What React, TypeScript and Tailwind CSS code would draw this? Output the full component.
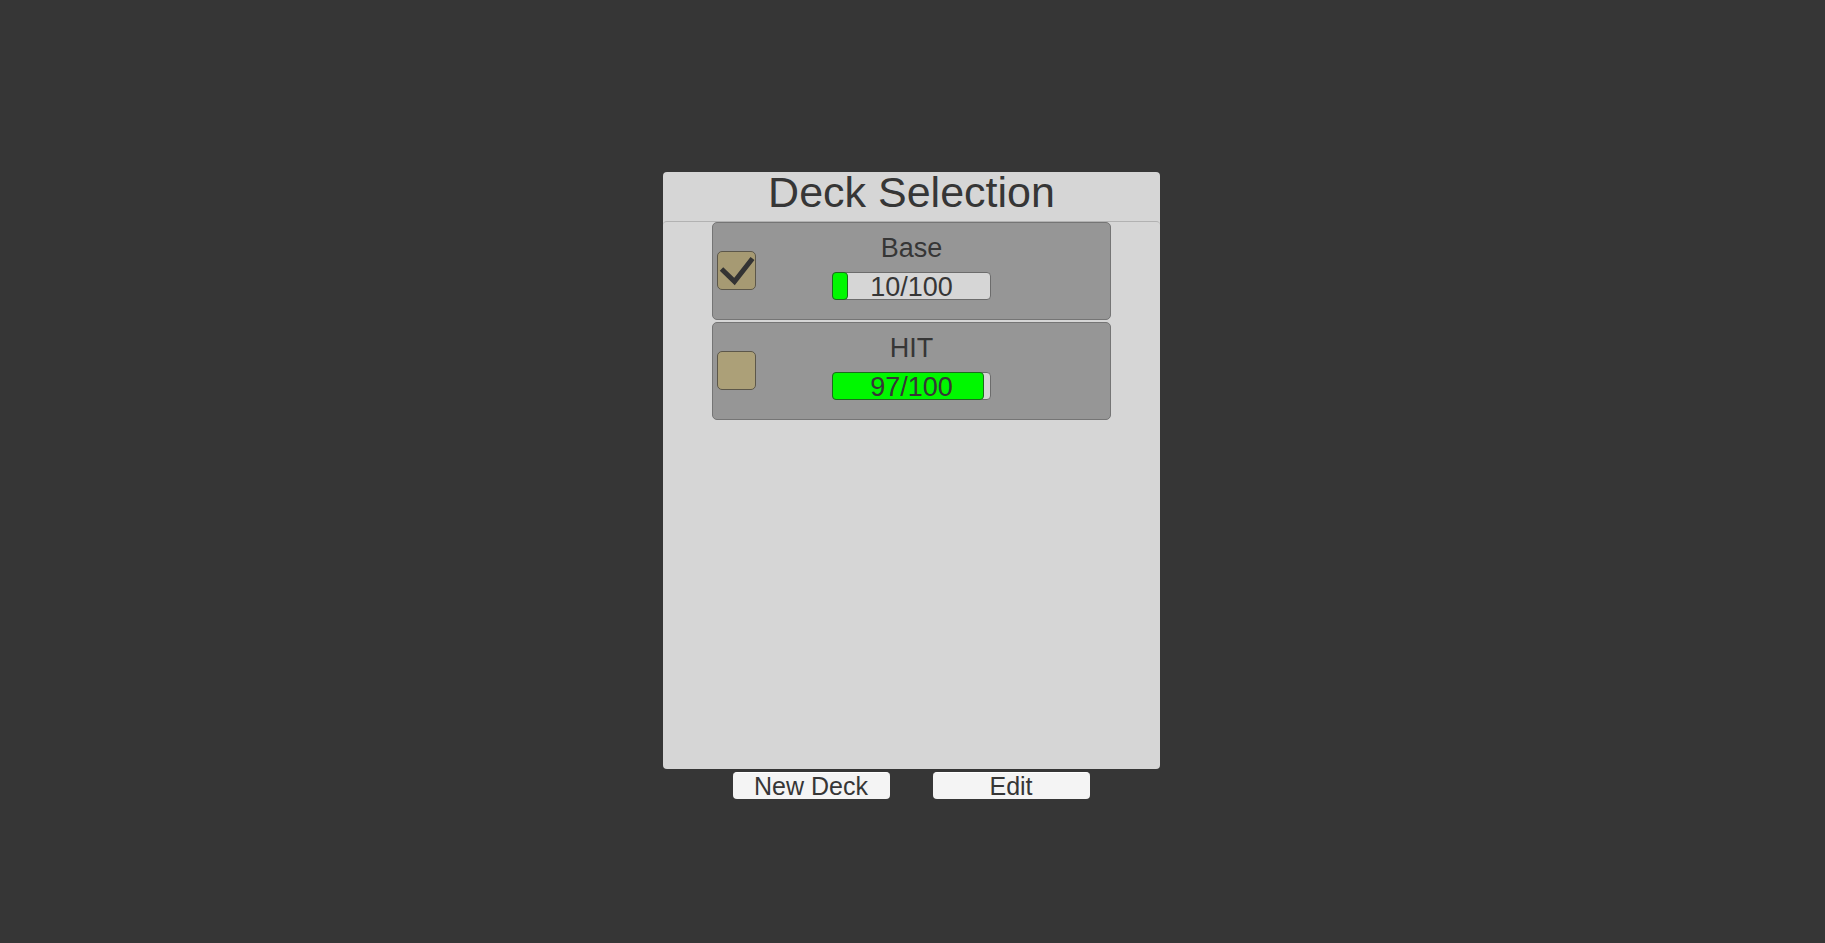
import { useState } from "react";

type Deck = { id: string; name: string; count: number; limit: number; selected: boolean };

const initialDecks: Deck[] = [
  { id: "base", name: "Base", count: 10, limit: 100, selected: true },
  { id: "hit", name: "HIT", count: 97, limit: 100, selected: false },
];

function CardCount({ count, limit, label }: { count: number; limit: number; label: string }) {
  return (
    <div
      role="progressbar"
      aria-label={label}
      aria-valuenow={count}
      aria-valuemin={0}
      aria-valuemax={limit}
      className="relative h-7 w-[159px] rounded border border-[#6c6c6c] bg-[#d6d6d6]"
    >
      <div
        className="absolute -inset-y-px -left-px rounded border border-[#1d6b1d] bg-[#00f800]"
        style={{ width: `${(count / limit) * 100}%` }}
      />
      <span className="relative block text-center text-[27px] leading-7">
        {count}/{limit}
      </span>
    </div>
  );
}

function DeckRow({ deck, onToggle }: { deck: Deck; onToggle: () => void }) {
  return (
    <li className="grid grid-cols-[40px_1fr_40px] items-start rounded-[5px] border border-[#757575] bg-[#969696] px-1">
      <span className="grid pt-7">
        <input
          id={deck.id}
          type="checkbox"
          checked={deck.selected}
          onChange={onToggle}
          className="peer col-start-1 row-start-1 size-[39px] appearance-none rounded-[5px] border border-[#5c574a] bg-[#aca078] checked:bg-[#a69a73]"
        />
        <svg
          viewBox="0 0 39 39"
          aria-hidden="true"
          className="pointer-events-none invisible col-start-1 row-start-1 size-[39px] peer-checked:visible"
        >
          <path d="M4.5 18 L17.5 30.5 L35.5 7.5" fill="none" stroke="#333333" strokeWidth="5" />
        </svg>
      </span>
      <div className="pointer-events-none -mx-10 flex h-24 flex-col items-center pt-[9px]">
        <label htmlFor={deck.id} className="pointer-events-auto mb-2 text-[27px] leading-8">
          {deck.name}
        </label>
        <CardCount count={deck.count} limit={deck.limit} label={`${deck.name} cards`} />
      </div>
    </li>
  );
}

export default function App() {
  const [decks, setDecks] = useState(initialDecks);
  const toggle = (id: string) =>
    setDecks(decks.map((d) => (d.id === id ? { ...d, selected: !d.selected } : d)));

  return (
    <main className="min-h-screen bg-[#363636] pt-43 pr-0.5 font-['Liberation_Sans',Arial,sans-serif] text-[#363636]">
      <div className="mx-auto w-[497px] max-w-full">
        <section className="rounded bg-[#d6d6d6]">
          <h1 className="pb-2 text-center text-[43px] leading-[41px]">Deck Selection</h1>
          <ul className="flex min-h-[548px] flex-col gap-0.5 rounded border-t border-[#b2b2b2] px-[49px]">
            {decks.map((deck) => (
              <DeckRow key={deck.id} deck={deck} onToggle={() => toggle(deck.id)} />
            ))}
          </ul>
        </section>
        <div className="mt-[3px] flex justify-center gap-[43px] pr-px">
          {["New Deck", "Edit"].map((action) => (
            <button
              key={action}
              type="button"
              className="h-[27px] w-[157px] rounded border-t border-white bg-[#f4f4f4] text-[25px] leading-[26px]"
            >
              {action}
            </button>
          ))}
        </div>
      </div>
    </main>
  );
}
